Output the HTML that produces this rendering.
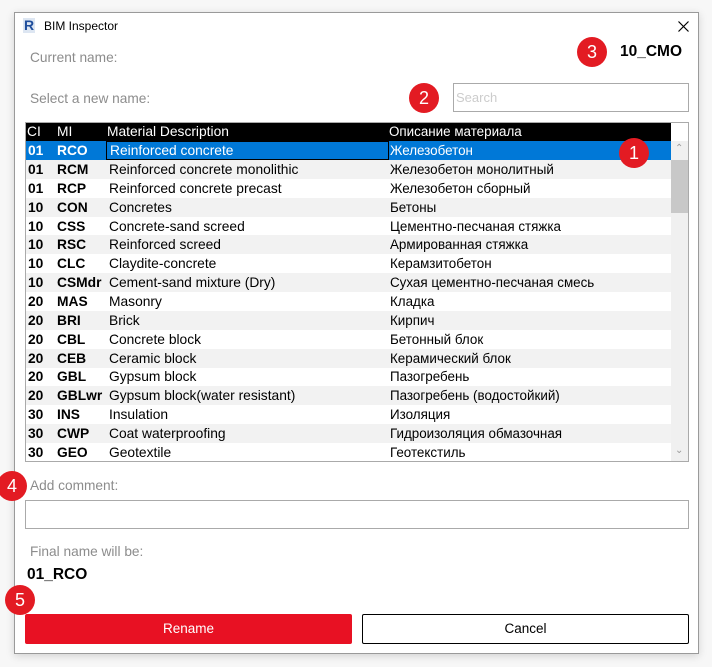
<!DOCTYPE html>
<html><head><meta charset="utf-8"><style>
*{margin:0;padding:0;box-sizing:border-box}
body{width:712px;height:667px;background:#f7f7f7;font-family:"Liberation Sans","DejaVu Sans",sans-serif;position:relative;overflow:hidden;color:#000}
.win{position:absolute;left:14px;top:12px;width:685px;height:642px;background:#fff;border:1px solid #9a9a9a;box-shadow:0 2px 8px rgba(0,0,0,.15)}
.a{position:absolute;white-space:nowrap}
.lbl{color:#8c8c8c;font-size:13.7px}
.c{position:absolute;width:30px;height:30px;border-radius:50%;background:#e31b23;color:#fff;font-size:18px;text-align:center;line-height:30px}
.tbl{position:absolute;left:25px;top:122px;width:664px;height:340px;border:1px solid #aaa;overflow:hidden}
.row{position:absolute;left:0;width:645px;height:19px;font-size:13.8px;line-height:19px}
.row span{position:absolute;top:0}
.ru{font-size:13.4px}
.b{font-weight:bold}
.g{background:#f2f2f2}
</style></head><body>
<div class="win"></div>
<div class="a" style="left:23px;top:18px;width:12px;height:15px;background:#dde6f2;color:#1f4e9c;font-weight:bold;font-size:14px;line-height:15px;text-align:center">R</div>
<div class="a" style="left:44px;top:19px;font-size:12px">BIM Inspector</div>
<svg class="a" style="left:678px;top:21px" width="11" height="11"><path d="M0.5 0.5L10.5 10.5M10.5 0.5L0.5 10.5" stroke="#000" stroke-width="1.2"/></svg>
<div class="a lbl" style="left:30px;top:50px">Current name:</div>
<div class="a b" style="left:620px;top:43px;font-size:15.5px">10_CMO</div>
<div class="a lbl" style="left:30px;top:91px">Select a new name:</div>
<div class="a" style="left:453px;top:83px;width:236px;height:29px;border:1px solid #aaa;color:#ccc;font-size:13px;padding:6px 2px">Search</div>
<div class="tbl">
<div class="row" style="top:0;width:645px;background:#000;color:#fff;height:18px;line-height:18px"><span style="left:1px">CI</span><span style="left:31px">MI</span><span style="left:81px">Material Description</span><span class="ru" style="left:363px">Описание материала</span></div>
<div class="row" style="top:18px;background:#0078d7;color:#fff"><span class="b" style="left:2px">01</span><span class="b" style="left:31px">RCO</span><span style="left:80px;top:0;width:283px;height:19px;border:1px solid #000;padding-left:3px;line-height:17px">Reinforced concrete</span><span class="ru" style="left:364px">Железобетон</span></div>
<div id="rows"></div>
<div style="position:absolute;left:645px;top:18px;width:18px;height:321px;background:#f0f0f0"></div>
<div style="position:absolute;left:645px;top:37px;width:18px;height:53px;background:#c8c8c8"></div>
<div style="position:absolute;left:649px;top:20px;font-size:10px;color:#999">&#8963;</div>
<div style="position:absolute;left:649px;top:322px;font-size:10px;color:#999">&#8964;</div>
</div>
<div class="a lbl" style="left:30px;top:478px">Add comment:</div>
<div class="a" style="left:25px;top:500px;width:664px;height:29px;border:1px solid #aaa"></div>
<div class="a lbl" style="left:30px;top:544px">Final name will be:</div>
<div class="a b" style="left:27px;top:566px;font-size:15.5px">01_RCO</div>
<div class="a" style="left:25px;top:614px;width:327px;height:30px;background:#e81123;border-radius:2px;color:#fff;font-size:13.5px;text-align:center;line-height:30px">Rename</div>
<div class="a" style="left:362px;top:614px;width:327px;height:30px;border:1px solid #000;border-radius:2px;font-size:13.5px;text-align:center;line-height:28px">Cancel</div>
<div class="c" style="left:619px;top:138px">1</div>
<div class="c" style="left:409px;top:83px">2</div>
<div class="c" style="left:577px;top:37px">3</div>
<div class="c" style="left:-3px;top:471px">4</div>
<div class="c" style="left:5px;top:585px">5</div>
<script>
var d=[["01","RCM","Reinforced concrete monolithic","Железобетон монолитный"],["01","RCP","Reinforced concrete precast","Железобетон сборный"],["10","CON","Concretes","Бетоны"],["10","CSS","Concrete-sand screed","Цементно-песчаная стяжка"],["10","RSC","Reinforced screed","Армированная стяжка"],["10","CLC","Claydite-concrete","Керамзитобетон"],["10","CSMdr","Cement-sand mixture (Dry)","Сухая цементно-песчаная смесь"],["20","MAS","Masonry","Кладка"],["20","BRI","Brick","Кирпич"],["20","CBL","Concrete block","Бетонный блок"],["20","CEB","Ceramic block","Керамический блок"],["20","GBL","Gypsum block","Пазогребень"],["20","GBLwr","Gypsum block(water resistant)","Пазогребень (водостойкий)"],["30","INS","Insulation","Изоляция"],["30","CWP","Coat waterproofing","Гидроизоляция обмазочная"],["30","GEO","Geotextile","Геотекстиль"]];
var h="";d.forEach(function(r,i){h+='<div class="row'+(i%2==0?' g':'')+'" style="top:'+Math.round(37+i*18.85)+'px"><span class="b" style="left:2px">'+r[0]+'</span><span class="b" style="left:31px">'+r[1]+'</span><span style="left:83px">'+r[2]+'</span><span class="ru" style="left:364px">'+r[3]+'</span></div>'});
document.getElementById("rows").outerHTML=h;
</script>
</body></html>
